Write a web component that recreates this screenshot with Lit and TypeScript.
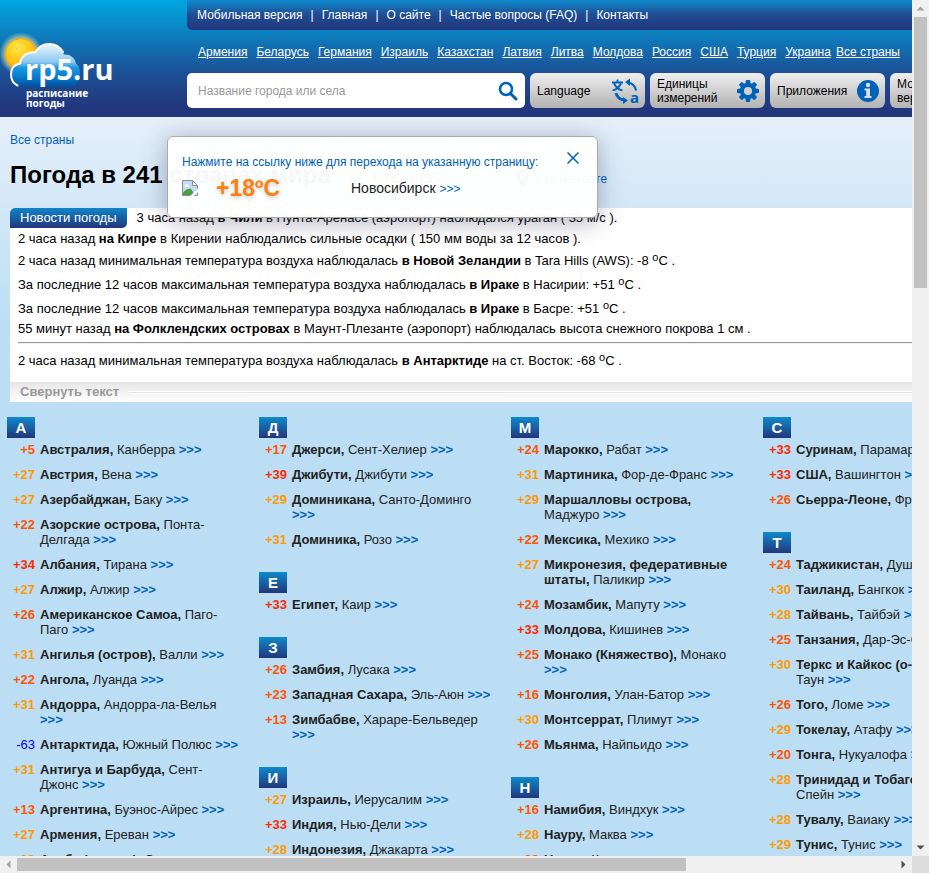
import { LitElement, html, css, svg, nothing } from "lit";
import { customElement, property } from "lit/decorators.js";

type Entry = [temp: number, country: string, city: string];
interface Group {
  letter: string;
  entries: Entry[];
}

const MENU = ["Мобильная версия", "Главная", "О сайте", "Частые вопросы (FAQ)", "Контакты"];

const COUNTRIES = [
  "Армения", "Беларусь", "Германия", "Израиль", "Казахстан", "Латвия", "Литва",
  "Молдова", "Россия", "США", "Турция", "Украина", "Все страны",
];

const COLUMNS: Group[][] = [
  [
    {
      letter: "А",
      entries: [
        [5, "Австралия", "Канберра"],
        [27, "Австрия", "Вена"],
        [27, "Азербайджан", "Баку"],
        [22, "Азорские острова", "Понта-Делгада"],
        [34, "Албания", "Тирана"],
        [27, "Алжир", "Алжир"],
        [26, "Американское Самоа", "Паго-Паго"],
        [31, "Ангилья (остров)", "Валли"],
        [22, "Ангола", "Луанда"],
        [31, "Андорра", "Андорра-ла-Велья"],
        [-63, "Антарктида", "Южный Полюс"],
        [31, "Антигуа и Барбуда", "Сент-Джонс"],
        [13, "Аргентина", "Буэнос-Айрес"],
        [27, "Армения", "Ереван"],
        [28, "Аруба (остров)", "Ораньестад"],
      ],
    },
  ],
  [
    {
      letter: "Д",
      entries: [
        [17, "Джерси", "Сент-Хелиер"],
        [39, "Джибути", "Джибути"],
        [29, "Доминикана", "Санто-Доминго"],
        [31, "Доминика", "Розо"],
      ],
    },
    { letter: "Е", entries: [[33, "Египет", "Каир"]] },
    {
      letter: "З",
      entries: [
        [26, "Замбия", "Лусака"],
        [23, "Западная Сахара", "Эль-Аюн"],
        [13, "Зимбабве", "Хараре-Бельведер"],
      ],
    },
    {
      letter: "И",
      entries: [
        [27, "Израиль", "Иерусалим"],
        [33, "Индия", "Нью-Дели"],
        [28, "Индонезия", "Джакарта"],
      ],
    },
  ],
  [
    {
      letter: "М",
      entries: [
        [24, "Марокко", "Рабат"],
        [31, "Мартиника", "Фор-де-Франс"],
        [29, "Маршалловы острова", "Маджуро"],
        [22, "Мексика", "Мехико"],
        [27, "Микронезия, федеративные штаты", "Паликир"],
        [24, "Мозамбик", "Мапуту"],
        [33, "Молдова", "Кишинев"],
        [25, "Монако (Княжество)", "Монако"],
        [16, "Монголия", "Улан-Батор"],
        [30, "Монтсеррат", "Плимут"],
        [26, "Мьянма", "Найпьидо"],
      ],
    },
    {
      letter: "Н",
      entries: [
        [16, "Намибия", "Виндхук"],
        [28, "Науру", "Маква"],
        [23, "Непал", "Катманду"],
      ],
    },
  ],
  [
    {
      letter: "С",
      entries: [
        [33, "Суринам", "Парамарибо"],
        [33, "США", "Вашингтон"],
        [26, "Сьерра-Леоне", "Фритаун"],
      ],
    },
    {
      letter: "Т",
      entries: [
        [24, "Таджикистан", "Душанбе"],
        [30, "Таиланд", "Бангкок"],
        [28, "Тайвань", "Тайбэй"],
        [25, "Танзания", "Дар-Эс-Салам"],
        [30, "Теркс и Кайкос (о-ва)", "Гранд-Таун"],
        [26, "Того", "Ломе"],
        [29, "Токелау", "Атафу"],
        [20, "Тонга", "Нукуалофа"],
        [28, "Тринидад и Тобаго", "Порт-оф-Спейн"],
        [28, "Тувалу", "Ваиаку"],
        [29, "Тунис", "Тунис"],
        [31, "Туркмения", "Ашхабад"],
      ],
    },
  ],
];

const iconTranslate = html`<svg width="28" height="26" viewBox="0 0 28 26" fill="none" stroke="#0061b8" stroke-width="2" aria-hidden="true">
  <path d="M1 4.500h11M6.500 1.500v3M3 5.500c1.500 3 4.500 6 8.500 7M10 5.500c-1.500 3-4.500 6-8.500 7" stroke-width="1.800"/>
  <path d="M17 4.500c4 .5 7 3 8 8" stroke-width="2.200"/><path d="M14 4l5-3.500v7.500z" fill="#0061b8" stroke="none"/>
  <path d="M5 15c1 4 4 6.500 8 7" stroke-width="3"/><path d="M17 22.500l-5-3.500v7z" fill="#0061b8" stroke="none"/>
  <text x="19" y="25" font-family="Open Sans, sans-serif" font-size="15" font-weight="700" fill="#0061b8" stroke="none">a</text>
</svg>`;

const iconGear = html`<svg width="22" height="22" viewBox="-11 -11 22 22" aria-hidden="true">
  <g fill="#0061b8">
    ${[0, 45, 90, 135].map((a) => svg`<rect transform="rotate(${a})" x="-2.300" y="-11" width="4.600" height="22" rx="1.300"/>`)}
    <circle r="8.200"/>
  </g>
  <circle r="4" fill="#d0d0d0"/>
</svg>`;

const iconInfo = html`<svg width="22" height="22" viewBox="0 0 22 22" aria-hidden="true">
  <circle cx="11" cy="11" r="11" fill="#0061b8"/>
  <circle cx="11" cy="5" r="2.200" fill="#ddd"/>
  <path d="M7.500 8.500H13V16h1.500v2h-7v-2H9.200v-5.500H7.500z" fill="#ddd"/>
</svg>`;

@customElement("site-header")
export class SiteHeader extends LitElement {
  static styles = css`
    :host {
      display: grid;
      grid-template-columns: 187px 1fr;
      height: 117px;
      font: 12px/14px "Liberation Sans", Arial, sans-serif;
      background: linear-gradient(#00a8e1, #0c80c0 28%, #1c5096 62%, #22387e 90%, #22367b);
      color: #fff;
    }
    a {
      color: inherit;
    }
    .logo {
      display: block;
      padding-top: 28px;
      text-decoration: none;
    }
    .logo svg {
      display: block;
    }
    .menu {
      display: flex;
      align-items: center;
      gap: 8px;
      height: 30px;
      padding-left: 10px;
      border-bottom-left-radius: 5px;
      background: linear-gradient(#0f8acc, #1f4b92 50%, #22367b);
    }
    .menu a {
      text-decoration: none;
    }
    .countries {
      display: flex;
      gap: 9px;
      height: 43px;
      align-items: center;
      padding-left: 11px;
      box-sizing: border-box;
    }
    .countries a:last-child {
      margin-left: -4px;
    }
    .tools {
      display: flex;
      gap: 5px;
      padding-right: 10px;
    }
    .search {
      flex: 1;
      display: flex;
      align-items: center;
      height: 35px;
      border-radius: 5px;
      background: #fff;
    }
    .search input {
      flex: 1;
      min-width: 0;
      padding: 0 0 0 11px;
      border: 0;
      outline: 0;
      background: none;
      font: inherit;
      color: #222;
    }
    .search input::placeholder {
      color: #999;
      opacity: 1;
    }
    .find {
      padding: 0 7px 0 0;
      border: 0;
      background: none;
    }
    .find svg {
      display: block;
    }
    .tool {
      display: flex;
      align-items: center;
      justify-content: space-between;
      width: 115px;
      height: 35px;
      padding: 0 6px 0 7px;
      border: 0;
      border-radius: 6px;
      background: linear-gradient(#efefef, #b2b2b2);
      font: inherit;
      text-align: left;
      color: #000;
    }
  `;

  render() {
    return html`
      <a class="logo" href="#" aria-label="rp5.ru">
        <svg width="120" height="86" viewBox="0 28 120 86">
          <defs>
            <radialGradient id="glow">
              <stop offset=".65" stop-color="#ffe88a" stop-opacity=".8"/>
              <stop offset="1" stop-color="#bfe3c0" stop-opacity="0"/>
            </radialGradient>
            <radialGradient id="sun" cx=".4" cy=".3" r=".8">
              <stop offset="0" stop-color="#ffe650"/>
              <stop offset=".6" stop-color="#ffc20e"/>
              <stop offset="1" stop-color="#f58a00"/>
            </radialGradient>
            <linearGradient id="cloud" x1="0" y1="43" x2="0" y2="87" gradientUnits="userSpaceOnUse">
              <stop offset="0" stop-color="#eef7fd"/>
              <stop offset=".42" stop-color="#8fcbf0"/>
              <stop offset=".56" stop-color="#1c96e0"/>
              <stop offset=".75" stop-color="#0a7fd0"/>
              <stop offset="1" stop-color="#004f9e"/>
            </linearGradient>
          </defs>
          <circle cx="21" cy="54" r="22" fill="url(#glow)"/>
          <circle cx="21" cy="54" r="15.500" fill="url(#sun)" stroke="#f7a400"/>
          <path d="M21 86.500c-6-1-10-6-10-12 0-6 3-10 9-11 1-7 7-12 15-11 3-5 8-8.500 14-8.500 7 0 12 4 15 10.500 6-.5 11 3 12 9 3 2 4 6 4 10 0 7-4 13-10 13z" fill="url(#cloud)"/>
          <path d="M17.500 85.500c-4-2-6.500-6-6.500-11 0-6 3-10 9-11 1-7 7-12 15-11 3-5 8-8.500 14-8.500 6 0 11 3 14 8" fill="none" stroke="#fff" stroke-width="2" stroke-linecap="round"/>
          <text x="25" y="80" font-family="Open Sans, Noto Sans, sans-serif" font-size="29" font-weight="700" fill="#fff">rp5.ru</text>
          <g font-family="Open Sans, Noto Sans, sans-serif" font-size="10" font-weight="700" fill="#fff">
            <text x="26" y="97">расписание</text>
            <text x="26" y="107">погоды</text>
          </g>
        </svg>
      </a>
      <div>
        <nav class="menu">
          ${MENU.map((m, i) => html`${i ? html`<span>|</span>` : nothing}<a href="#">${m}</a>`)}
        </nav>
        <nav class="countries">${COUNTRIES.map((c) => html`<a href="#">${c}</a>`)}</nav>
        <div class="tools">
          <form class="search">
            <input type="text" placeholder="Название города или села" aria-label="Название города или села" />
            <button class="find" type="button" aria-label="Найти">
              <svg width="20" height="20" viewBox="0 0 20 20" fill="none" stroke="#0061b8">
                <circle cx="8" cy="8" r="6" stroke-width="2.500"/>
                <path d="M12.500 12.500l5.500 5.500" stroke-width="3" stroke-linecap="round"/>
              </svg>
            </button>
          </form>
          <button class="tool" type="button">Language ${iconTranslate}</button>
          <button class="tool" type="button"><span>Единицы<br />измерений</span>${iconGear}</button>
          <button class="tool" type="button">Приложения ${iconInfo}</button>
          <button class="tool" type="button"><span>Мобильная<br />версия</span></button>
        </div>
      </div>
    `;
  }
}

@customElement("weather-news")
export class WeatherNews extends LitElement {
  static styles = css`
    :host {
      display: block;
      background: #fff;
      font: 13px/18px "Liberation Sans", Arial, sans-serif;
      color: #000;
    }
    .head {
      display: flex;
      gap: 10px;
      line-height: 20px;
      margin-bottom: 2px;
    }
    h2 {
      margin: 0;
      padding: 0 10px;
      border-radius: 5px 0 5px 0;
      background: linear-gradient(#1085c8, #22367b);
      color: #fff;
      font: inherit;
    }
    p {
      margin: 0;
    }
    .list {
      padding: 0 0 10px 8px;
    }
    .tall {
      padding: 4px 0 2px;
    }
    sup {
      font-size: 11px;
      line-height: 0;
      vertical-align: 4px;
    }
    hr {
      margin: 4px 0;
      border: 0;
      border-top: 1px solid #999;
      border-bottom: 1px solid #eee;
    }
    .fold {
      display: flex;
      align-items: center;
      gap: 10px;
      width: 100%;
      height: 20px;
      padding: 0 0 0 10px;
      border: 0;
      background: linear-gradient(#e6e6e6, #fff);
      font: bold 13px/20px "Liberation Sans", Arial, sans-serif;
      color: #999;
    }
    .rule {
      flex: 1;
      height: 1px;
      background: #e4e4e4;
      border: solid #fcfcfc;
      border-width: 1px 0;
    }
  `;

  render() {
    const deg = html`<sup>o</sup>C`;
    return html`
      <div class="head">
        <h2>Новости погоды</h2>
        <p>3 часа назад <b>в Чили</b> в Пунта-Аренасе (аэропорт) наблюдался ураган ( 35 м/с ).</p>
      </div>
      <div class="list">
        <p>2 часа назад <b>на Кипре</b> в Кирении наблюдались сильные осадки ( 150 мм воды за 12 часов ).</p>
        <p class="tall">2 часа назад минимальная температура воздуха наблюдалась <b>в Новой Зеландии</b> в Tara Hills (AWS): -8 ${deg} .</p>
        <p class="tall">За последние 12 часов максимальная температура воздуха наблюдалась <b>в Ираке</b> в Насирии: +51 ${deg} .</p>
        <p class="tall">За последние 12 часов максимальная температура воздуха наблюдалась <b>в Ираке</b> в Басре: +51 ${deg} .</p>
        <p>55 минут назад <b>на Фолклендских островах</b> в Маунт-Плезанте (аэропорт) наблюдалась высота снежного покрова 1 см .</p>
        <hr />
        <p class="tall">2 часа назад минимальная температура воздуха наблюдалась <b>в Антарктиде</b> на ст. Восток: -68 ${deg} .</p>
      </div>
      <button class="fold" type="button">Свернуть текст<span class="rule"></span></button>
    `;
  }
}

@customElement("country-group")
export class CountryGroup extends LitElement {
  @property({ attribute: false }) group!: Group;

  static styles = css`
    :host {
      display: block;
      font: 13px/15px "Liberation Sans", Arial, sans-serif;
      color: #222;
    }
    h3 {
      width: 28px;
      margin: 0 0 4px;
      background: linear-gradient(#0f8acc, #22367b);
      color: #fff;
      font-size: 15px;
      line-height: 21px;
      text-align: center;
    }
    ul {
      display: grid;
      gap: 10px;
      margin: 0;
      padding: 0;
      list-style: none;
    }
    li {
      display: grid;
      grid-template-columns: 28px 1fr;
      column-gap: 5px;
      padding-right: 19px;
    }
    .temp {
      text-align: right;
      font-weight: bold;
    }
    .temp.frost {
      color: #00f;
      font-weight: normal;
    }
    .mild {
      color: #ff5500;
    }
    .warm {
      color: #ff9900;
    }
    .hot {
      color: #ff2a00;
    }
    a {
      color: #0061b8;
      font-weight: bold;
      text-decoration: none;
    }
  `;

  private tone(t: number) {
    return t < 0 ? "frost" : t < 27 ? "mild" : t < 33 ? "warm" : "hot";
  }

  render() {
    return html`
      <h3>${this.group.letter}</h3>
      <ul>
        ${this.group.entries.map(
          ([t, country, city]) => html`<li>
            <span class="temp ${this.tone(t)}">${t > 0 ? "+" : ""}${t}</span>
            <span><b>${country},</b> ${city} <a href="#" aria-label=${country}>&gt;&gt;&gt;</a></span>
          </li>`,
        )}
      </ul>
    `;
  }
}

@customElement("city-popup")
export class CityPopup extends LitElement {
  static styles = css`
    :host {
      display: block;
      box-sizing: border-box;
      padding: 15px 14px;
      border: 1px solid #aaa;
      border-radius: 6px;
      background: rgba(255, 255, 255, 0.97);
      box-shadow: 0 4px 24px rgba(60, 60, 90, 0.4);
      font: 12px/20px "Liberation Sans", Arial, sans-serif;
      color: #0061b8;
    }
    .top {
      display: flex;
      justify-content: space-between;
    }
    p {
      margin: 0;
    }
    .close {
      height: 12px;
      margin-right: 4px;
      padding: 0;
      border: 0;
      background: none;
    }
    .close svg,
    .broken {
      display: block;
    }
    .row {
      display: grid;
      grid-template-columns: 34px 135px 1fr;
      align-items: center;
      height: 32px;
    }
    .temp {
      font-size: 23px;
      font-weight: bold;
      color: #ff7f0e;
      text-shadow: 0 2px 4px rgba(0, 0, 0, 0.2);
    }
    .city {
      font-size: 14px;
      color: #222;
    }
    a {
      color: #0061b8;
      font-size: 12px;
      text-decoration: none;
    }
  `;

  render() {
    return html`
      <div class="top">
        <p>Нажмите на ссылку ниже для перехода на указанную страницу:</p>
        <button class="close" type="button" aria-label="Закрыть">
          <svg width="12" height="12" viewBox="0 0 12 12" stroke="#0061b8" stroke-width="1.500"><path d="M.5.5l11 11M11.500.5l-11 11"/></svg>
        </button>
      </div>
      <div class="row">
        <svg class="broken" width="16" height="16" viewBox="0 0 16 16" aria-hidden="true">
          <path d="M.5.5h10l5 5v10H.5z" fill="#c3d9f7" stroke="#8c8c8c"/>
          <path d="M10.500.5v5h5z" fill="#fff" stroke="#8c8c8c"/>
          <path d="M3 6c0-2 3-2.500 3.500-.5C8 5.500 8 7 7 7H3.500z" fill="#fff"/>
          <path d="M1 13c2-3 5-5 8-4l4 6H1z" fill="#4ba03c"/>
          <path d="M8 16l8-7.500V12l-4 4z" fill="#fff"/>
        </svg>
        <span class="temp">+18ºC</span>
        <span class="city">Новосибирск <a href="#">&gt;&gt;&gt;</a></span>
      </div>
    `;
  }
}

@customElement("app-root")
export class AppRoot extends LitElement {
  static styles = css`
    :host {
      display: grid;
      grid-template: minmax(0, 1fr) 17px / minmax(0, 1fr) 17px;
      height: 100vh;
      overflow: hidden;
      font: 12px/14px "Liberation Sans", Arial, sans-serif;
    }
    .view {
      position: relative;
      overflow: hidden;
      background: #bbdef5;
    }
    .page {
      min-width: 1015px;
    }
    .intro {
      padding: 16px 10px 0;
      background: linear-gradient(#e5eff9, #bbdef5 210px);
    }
    .intro a {
      color: #0061b8;
      text-decoration: none;
    }
    .title {
      display: flex;
      align-items: center;
      height: 30px;
      margin: 13px 0 18px;
      font-size: 13px;
    }
    h1 {
      margin: 0;
      font-size: 24px;
      line-height: 30px;
      color: #000;
    }
    .utc,
    .map {
      display: flex;
      align-items: center;
      gap: 5px;
      padding-top: 8px;
      color: #333;
    }
    .utc {
      margin-left: 20px;
    }
    .map {
      margin-left: 76px;
      gap: 7px;
      font-size: 12px;
    }
    .columns {
      display: grid;
      grid-template-columns: repeat(4, minmax(0, 1fr));
      padding: 15px 0 0 7px;
    }
    .column {
      display: flex;
      flex-direction: column;
      gap: 25px;
    }
    .popup {
      position: absolute;
      left: 167px;
      top: 136px;
      width: 431px;
      height: 82px;
    }
    .bar {
      display: flex;
      align-items: center;
      justify-content: space-between;
      background: #f0f0f0;
    }
    .bar svg {
      flex: none;
    }
    .vertical {
      flex-direction: column;
    }
    .track {
      flex: 1;
      align-self: stretch;
      display: flex;
    }
    .vertical .track {
      flex-direction: column;
      padding: 0 2px;
    }
    .horizontal .track {
      padding: 2px 0;
    }
    .thumb {
      background: #c1c1c1;
    }
    .vertical .thumb {
      height: 33%;
    }
    .horizontal .thumb {
      width: 76.2%;
    }
    .corner {
      background: #dcdcdc;
    }
  `;

  private arrow(angle: number, color: string) {
    return html`<svg width="17" height="17" viewBox="-8.500 -8.500 17 17">
      <path transform="rotate(${angle})" d="M-4 2h8L0-2z" fill=${color} />
    </svg>`;
  }

  render() {
    return html`
      <div class="view">
        <div class="page">
          <site-header></site-header>
          <div class="intro">
            <a href="#">Все страны</a>
            <div class="title">
              <h1>Погода в 241 странах мира</h1>
              <span class="utc">
                <svg width="18" height="18" viewBox="0 0 18 18" fill="none" stroke="#bbb" stroke-width="2"><circle cx="9" cy="9" r="8"/><path d="M9 4v5l3 2"/></svg>
                UTC, 19:55
              </span>
              <a class="map" href="#">
                <svg width="13" height="18" viewBox="0 0 13 18"><path d="M6.500 18C4 13 0 10 0 6.500a6.500 6.500 0 0 1 13 0C13 10 9 13 6.500 18z" fill="#0061b8"/><circle cx="6.500" cy="6.500" r="2.500" fill="#fff"/></svg>
                См. на карте
              </a>
            </div>
            <weather-news></weather-news>
          </div>
          <main class="columns">
            ${COLUMNS.map(
              (groups) => html`<div class="column">
                ${groups.map((g) => html`<country-group .group=${g}></country-group>`)}
              </div>`,
            )}
          </main>
        </div>
        <city-popup class="popup"></city-popup>
      </div>
      <div class="bar vertical" aria-hidden="true">
        ${this.arrow(0, "#a3a3a3")}
        <div class="track"><div class="thumb"></div></div>
        ${this.arrow(180, "#505050")}
      </div>
      <div class="bar horizontal" aria-hidden="true">
        ${this.arrow(-90, "#a3a3a3")}
        <div class="track"><div class="thumb"></div></div>
        ${this.arrow(90, "#505050")}
      </div>
      <div class="corner"></div>
    `;
  }
}
